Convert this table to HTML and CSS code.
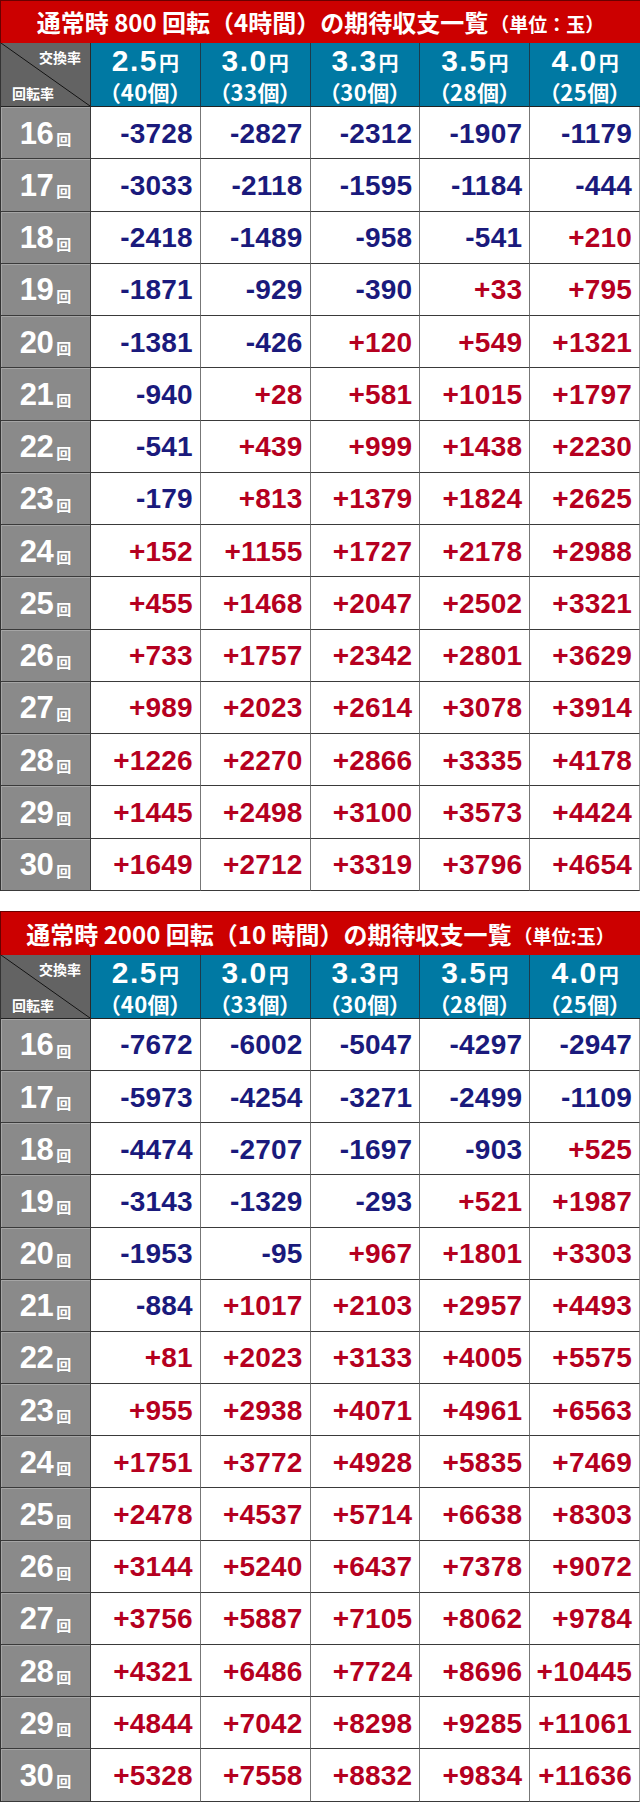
FILE: index.html
```html
<!DOCTYPE html>
<html lang="ja">
<head>
<meta charset="utf-8">
<title>期待収支一覧</title>
<link rel="stylesheet" href="styles.css">
</head>
<body>
<section class="block">
  <h2 class="title">通常時 800 回転（4時間）の期待収支一覧<span class="unit">（単位：玉）</span></h2>
  <div class="table">
    <div class="corner"><span class="c-top">交換率</span><span class="c-bot">回転率</span></div>
    <div class="hd"><div class="rate">2.5<span class="yen">円</span></div><div class="cnt">（40個）</div></div>
    <div class="hd"><div class="rate">3.0<span class="yen">円</span></div><div class="cnt">（33個）</div></div>
    <div class="hd"><div class="rate">3.3<span class="yen">円</span></div><div class="cnt">（30個）</div></div>
    <div class="hd"><div class="rate">3.5<span class="yen">円</span></div><div class="cnt">（28個）</div></div>
    <div class="hd"><div class="rate">4.0<span class="yen">円</span></div><div class="cnt">（25個）</div></div>

    <div class="rh">16<span class="kai">回</span></div><div class="c neg">-3728</div><div class="c neg">-2827</div><div class="c neg">-2312</div><div class="c neg">-1907</div><div class="c neg">-1179</div>
    <div class="rh">17<span class="kai">回</span></div><div class="c neg">-3033</div><div class="c neg">-2118</div><div class="c neg">-1595</div><div class="c neg">-1184</div><div class="c neg">-444</div>
    <div class="rh">18<span class="kai">回</span></div><div class="c neg">-2418</div><div class="c neg">-1489</div><div class="c neg">-958</div><div class="c neg">-541</div><div class="c pos">+210</div>
    <div class="rh">19<span class="kai">回</span></div><div class="c neg">-1871</div><div class="c neg">-929</div><div class="c neg">-390</div><div class="c pos">+33</div><div class="c pos">+795</div>
    <div class="rh">20<span class="kai">回</span></div><div class="c neg">-1381</div><div class="c neg">-426</div><div class="c pos">+120</div><div class="c pos">+549</div><div class="c pos">+1321</div>
    <div class="rh">21<span class="kai">回</span></div><div class="c neg">-940</div><div class="c pos">+28</div><div class="c pos">+581</div><div class="c pos">+1015</div><div class="c pos">+1797</div>
    <div class="rh">22<span class="kai">回</span></div><div class="c neg">-541</div><div class="c pos">+439</div><div class="c pos">+999</div><div class="c pos">+1438</div><div class="c pos">+2230</div>
    <div class="rh">23<span class="kai">回</span></div><div class="c neg">-179</div><div class="c pos">+813</div><div class="c pos">+1379</div><div class="c pos">+1824</div><div class="c pos">+2625</div>
    <div class="rh">24<span class="kai">回</span></div><div class="c pos">+152</div><div class="c pos">+1155</div><div class="c pos">+1727</div><div class="c pos">+2178</div><div class="c pos">+2988</div>
    <div class="rh">25<span class="kai">回</span></div><div class="c pos">+455</div><div class="c pos">+1468</div><div class="c pos">+2047</div><div class="c pos">+2502</div><div class="c pos">+3321</div>
    <div class="rh">26<span class="kai">回</span></div><div class="c pos">+733</div><div class="c pos">+1757</div><div class="c pos">+2342</div><div class="c pos">+2801</div><div class="c pos">+3629</div>
    <div class="rh">27<span class="kai">回</span></div><div class="c pos">+989</div><div class="c pos">+2023</div><div class="c pos">+2614</div><div class="c pos">+3078</div><div class="c pos">+3914</div>
    <div class="rh">28<span class="kai">回</span></div><div class="c pos">+1226</div><div class="c pos">+2270</div><div class="c pos">+2866</div><div class="c pos">+3335</div><div class="c pos">+4178</div>
    <div class="rh">29<span class="kai">回</span></div><div class="c pos">+1445</div><div class="c pos">+2498</div><div class="c pos">+3100</div><div class="c pos">+3573</div><div class="c pos">+4424</div>
    <div class="rh">30<span class="kai">回</span></div><div class="c pos">+1649</div><div class="c pos">+2712</div><div class="c pos">+3319</div><div class="c pos">+3796</div><div class="c pos">+4654</div>
  </div>
</section>

<section class="block second">
  <h2 class="title">通常時 2000 回転（10 時間）の期待収支一覧<span class="unit">（単位:玉）</span></h2>
  <div class="table">
    <div class="corner"><span class="c-top">交換率</span><span class="c-bot">回転率</span></div>
    <div class="hd"><div class="rate">2.5<span class="yen">円</span></div><div class="cnt">（40個）</div></div>
    <div class="hd"><div class="rate">3.0<span class="yen">円</span></div><div class="cnt">（33個）</div></div>
    <div class="hd"><div class="rate">3.3<span class="yen">円</span></div><div class="cnt">（30個）</div></div>
    <div class="hd"><div class="rate">3.5<span class="yen">円</span></div><div class="cnt">（28個）</div></div>
    <div class="hd"><div class="rate">4.0<span class="yen">円</span></div><div class="cnt">（25個）</div></div>

    <div class="rh">16<span class="kai">回</span></div><div class="c neg">-7672</div><div class="c neg">-6002</div><div class="c neg">-5047</div><div class="c neg">-4297</div><div class="c neg">-2947</div>
    <div class="rh">17<span class="kai">回</span></div><div class="c neg">-5973</div><div class="c neg">-4254</div><div class="c neg">-3271</div><div class="c neg">-2499</div><div class="c neg">-1109</div>
    <div class="rh">18<span class="kai">回</span></div><div class="c neg">-4474</div><div class="c neg">-2707</div><div class="c neg">-1697</div><div class="c neg">-903</div><div class="c pos">+525</div>
    <div class="rh">19<span class="kai">回</span></div><div class="c neg">-3143</div><div class="c neg">-1329</div><div class="c neg">-293</div><div class="c pos">+521</div><div class="c pos">+1987</div>
    <div class="rh">20<span class="kai">回</span></div><div class="c neg">-1953</div><div class="c neg">-95</div><div class="c pos">+967</div><div class="c pos">+1801</div><div class="c pos">+3303</div>
    <div class="rh">21<span class="kai">回</span></div><div class="c neg">-884</div><div class="c pos">+1017</div><div class="c pos">+2103</div><div class="c pos">+2957</div><div class="c pos">+4493</div>
    <div class="rh">22<span class="kai">回</span></div><div class="c pos">+81</div><div class="c pos">+2023</div><div class="c pos">+3133</div><div class="c pos">+4005</div><div class="c pos">+5575</div>
    <div class="rh">23<span class="kai">回</span></div><div class="c pos">+955</div><div class="c pos">+2938</div><div class="c pos">+4071</div><div class="c pos">+4961</div><div class="c pos">+6563</div>
    <div class="rh">24<span class="kai">回</span></div><div class="c pos">+1751</div><div class="c pos">+3772</div><div class="c pos">+4928</div><div class="c pos">+5835</div><div class="c pos">+7469</div>
    <div class="rh">25<span class="kai">回</span></div><div class="c pos">+2478</div><div class="c pos">+4537</div><div class="c pos">+5714</div><div class="c pos">+6638</div><div class="c pos">+8303</div>
    <div class="rh">26<span class="kai">回</span></div><div class="c pos">+3144</div><div class="c pos">+5240</div><div class="c pos">+6437</div><div class="c pos">+7378</div><div class="c pos">+9072</div>
    <div class="rh">27<span class="kai">回</span></div><div class="c pos">+3756</div><div class="c pos">+5887</div><div class="c pos">+7105</div><div class="c pos">+8062</div><div class="c pos">+9784</div>
    <div class="rh">28<span class="kai">回</span></div><div class="c pos">+4321</div><div class="c pos">+6486</div><div class="c pos">+7724</div><div class="c pos">+8696</div><div class="c pos">+10445</div>
    <div class="rh">29<span class="kai">回</span></div><div class="c pos">+4844</div><div class="c pos">+7042</div><div class="c pos">+8298</div><div class="c pos">+9285</div><div class="c pos">+11061</div>
    <div class="rh">30<span class="kai">回</span></div><div class="c pos">+5328</div><div class="c pos">+7558</div><div class="c pos">+8832</div><div class="c pos">+9834</div><div class="c pos">+11636</div>
  </div>
</section>
</body>
</html>
```
FILE: styles.css
```css
* { box-sizing: border-box; }
html, body { margin: 0; padding: 0; background: #fff; }
body {
  width: 640px;
  font-family: "Liberation Sans", Arial, "Noto Sans CJK JP", sans-serif;
}
.block { width: 640px; }
.second { margin-top: 20px; }

.title {
  margin: 0;
  height: 43px;
  background: #cc0000;
  border-top: 1px solid #6a0000;
  border-left: 1px solid #6a0000;
  color: #fff;
  font-family: "Noto Sans CJK JP", sans-serif;
  font-weight: 700;
  font-size: 24px;
  line-height: 42px;
  text-align: center;
  white-space: nowrap;
  letter-spacing: 0;
}
.second .title { height: 44px; line-height: 43px; }
.unit {
  font-size: 19px;
  margin-left: 2px;
}

.table {
  display: grid;
  grid-template-columns: 90px repeat(5, 1fr);
  grid-template-rows: 64px repeat(15, 52.25px);
  border-left: 1px solid #333;
}
.second .table { grid-template-rows: 64px repeat(15, 52.2px); }

.corner {
  background:
    linear-gradient(to top right, transparent calc(50% - 0.8px), #111 50%, transparent calc(50% + 0.8px)),
    #636363;
  border-right: 1px solid #2a2a2a;
  border-bottom: 1px solid #222;
  color: #fff;
  font-family: "Noto Sans CJK JP", sans-serif;
  font-weight: 700;
  font-size: 14px;
  line-height: 1;
  display: flex;
  flex-direction: column;
  justify-content: space-between;
  padding: 7px 9px 6px 11px;
}
.c-top { align-self: flex-end; }
.c-bot { align-self: flex-start; }

.hd {
  background: #0079a3;
  border-right: 1px solid #1c3b4c;
  border-bottom: 1px solid #222;
  color: #fff;
  display: flex;
  flex-direction: column;
  align-items: center;
  justify-content: center;
  padding-top: 1px;
}
.hd:nth-child(6) { border-right: none; }
.rate {
  font-family: "Liberation Sans", Arial, sans-serif;
  font-weight: 700;
  font-size: 30px;
  line-height: 30px;
  letter-spacing: 1.5px;
}
.yen {
  font-family: "Noto Sans CJK JP", sans-serif;
  font-size: 20px;
  margin-left: 1px;
  letter-spacing: 0;
}
.cnt {
  font-family: "Noto Sans CJK JP", sans-serif;
  font-weight: 700;
  font-size: 22px;
  line-height: 25px;
  font-feature-settings: "palt";
  letter-spacing: 0.5px;
  margin-top: 1px;
}

.rh {
  background: #8a8a8a;
  border-right: 1px solid #3a3a3a;
  border-bottom: 1px solid #3a3a3a;
  box-shadow: inset 1px 1px 0 #a5a5a5;
  color: #fff;
  display: flex;
  align-items: center;
  justify-content: center;
  font-weight: 700;
  font-size: 31px;
  letter-spacing: -0.5px;
  padding-top: 2px;
}
.kai {
  font-family: "Noto Sans CJK JP", sans-serif;
  font-size: 15px;
  font-weight: 700;
  margin-left: 3px;
  margin-top: 10px;
  letter-spacing: 0;
}

.c {
  background: #fff;
  border-right: 1px solid #777;
  border-bottom: 1px solid #3a3a3a;
  display: flex;
  align-items: center;
  justify-content: flex-end;
  padding-right: 7px;
  padding-top: 2px;
  font-family: "Liberation Sans", Arial, sans-serif;
  font-weight: 700;
  font-size: 28px;
  letter-spacing: 0.2px;
}
.c:nth-child(6n) { border-right: 1px solid #999; }
.neg { color: #1a1a7c; }
.pos { color: #b5001f; }
```
